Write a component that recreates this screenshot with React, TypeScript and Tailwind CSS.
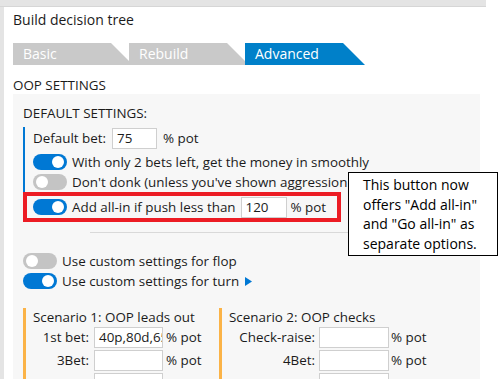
import type { ReactNode } from 'react';

const font = { fontFamily: '"Open Sans", "Noto Sans", sans-serif' };

function Toggle({ on }: { on: boolean }) {
  return (
    <span
      className={`relative inline-block w-[34px] h-[16px] rounded-full shrink-0 ${on ? 'bg-[#0078d4]' : 'bg-[#c4c4c4]'}`}
    >
      <span
        className={`absolute top-[2px] w-[12px] h-[12px] rounded-full bg-white ${on ? 'right-[3px]' : 'left-[3px]'}`}
      />
    </span>
  );
}

function ToggleRow({ on, children, className = '' }: { on: boolean; children: ReactNode; className?: string }) {
  return (
    <div className={`flex items-center gap-[5px] h-[20px] ${className}`}>
      <Toggle on={on} />
      <span className="whitespace-nowrap">{children}</span>
    </div>
  );
}

function Input({ value = '', w }: { value?: string; w: string }) {
  return (
    <div className={`${w} h-[21px] bg-white border border-[#cfcfcf] px-[4px] leading-[19px] overflow-hidden whitespace-nowrap shrink-0`}>
      {value}
    </div>
  );
}

const tabShape = { clipPath: 'polygon(0 0, calc(100% - 22px) 0, 100% 100%, 0 100%)' };

const scenario1 = [
  { label: '1st bet:', value: '40p,80d,65' },
  { label: '3Bet:', value: '' },
  { label: '', value: '' },
];

const scenario2 = [
  { label: 'Check-raise:', value: '' },
  { label: '4Bet:', value: '' },
  { label: '', value: '' },
];

export default function App() {
  return (
    <div className="relative w-[502px] h-[379px] overflow-hidden bg-white text-[13.4px] text-[#1b1b1b]" style={font}>
      <div className="w-[486px] h-[7px] bg-[#e4e4e4] border-b border-[#d6d6d6]" />
      <div className="flex h-[372px]">
        <div className="w-[4px] bg-[#e4e4e4] shrink-0" />
        <div className="flex-1 pl-[9px]">
          <div className="pt-[3px] h-[23px] leading-[20px] text-[14px]">Build decision tree</div>

          <div className="flex mt-[13px] h-[22px] text-white leading-[22px] text-[14px]">
            <div className="w-[120px] bg-[#c9c9c9] pl-[10px]" style={tabShape}>Basic</div>
            <div className="w-[120px] -ml-[4px] bg-[#c9c9c9] pl-[10px]" style={tabShape}>Rebuild</div>
            <div className="w-[120px] -ml-[4px] bg-[#0080c9] pl-[10px]" style={tabShape}>Advanced</div>
          </div>

          <div className="h-[29px] pt-[11px] leading-[18px]">OOP SETTINGS</div>

          <div className="w-[467px] h-[300px] bg-[#f7f7f7] pl-[10px]">
            <div className="pt-[10px] h-[28px] leading-[18px]">DEFAULT SETTINGS:</div>

            <div className="mt-[5px] border-l-2 border-[#0078d4] pl-[8px]">
              <div className="flex items-center gap-[6px] h-[22px]">
                <span>Default bet:</span>
                <Input value="75" w="w-[45px]" />
                <span>% pot</span>
              </div>
              <ToggleRow on className="mt-[3px]">With only 2 bets left, get the money in smoothly</ToggleRow>
              <ToggleRow on={false}>Don't donk (unless you've shown aggression</ToggleRow>
            </div>

            <div className="w-[318px] h-[30px] border-4 border-[#ec1c24] pl-[6px] flex items-center gap-[5px]">
              <Toggle on />
              <span className="whitespace-nowrap">Add all-in if push less than</span>
              <Input value="120" w="w-[46px]" />
              <span className="-ml-[1px] whitespace-nowrap">% pot</span>
            </div>

            <div className="ml-[67px] mt-[10px] h-px bg-[#d9d9d9]" />

            <ToggleRow on={false} className="mt-[18px]">Use custom settings for flop</ToggleRow>
            <ToggleRow on>
              <span className="inline-flex items-center gap-[6px]">
                Use custom settings for turn
                <svg width="7" height="9" viewBox="0 0 7 9">
                  <path d="M0 0 L7 4.5 L0 9 Z" fill="#0078d4" />
                </svg>
              </span>
            </ToggleRow>

            <div className="mt-[17px] grid grid-cols-[196px_1fr]">
              <div className="border-l-[3px] border-[#fbb347] pl-[7px]">
                <div className="h-[19px] leading-[18px] whitespace-nowrap">Scenario 1: OOP leads out</div>
                <div className="flex flex-col gap-[2px]">
                  {scenario1.map((r, i) => (
                    <div key={i} className="flex items-center h-[21px]">
                      <span className="w-[56px] shrink-0 text-right whitespace-nowrap">{r.label}</span>
                      <span className="ml-[5px] shrink-0"><Input value={r.value} w="w-[69px]" /></span>
                      <span className="ml-[3px] whitespace-nowrap">% pot</span>
                    </div>
                  ))}
                </div>
              </div>
              <div className="border-l-[3px] border-[#fbb347] pl-[7px]">
                <div className="h-[19px] leading-[18px] whitespace-nowrap">Scenario 2: OOP checks</div>
                <div className="flex flex-col gap-[2px]">
                  {scenario2.map((r, i) => (
                    <div key={i} className="flex items-center h-[21px]">
                      <span className="w-[86px] shrink-0 text-right whitespace-nowrap">{r.label}</span>
                      <span className="ml-[4px] shrink-0"><Input value={r.value} w="w-[70px]" /></span>
                      <span className="ml-[2px] whitespace-nowrap">% pot</span>
                    </div>
                  ))}
                </div>
              </div>
            </div>
          </div>
        </div>
      </div>

      <div className="absolute left-[348px] top-[172px] w-[150px] h-[84px] bg-white border border-black pl-[14px] pt-[2px] leading-[19.5px] text-[14px] text-black">
        <div>This button now</div>
        <div>offers "Add all-in"</div>
        <div>and "Go all-in" as</div>
        <div>separate options.</div>
      </div>
    </div>
  );
}
